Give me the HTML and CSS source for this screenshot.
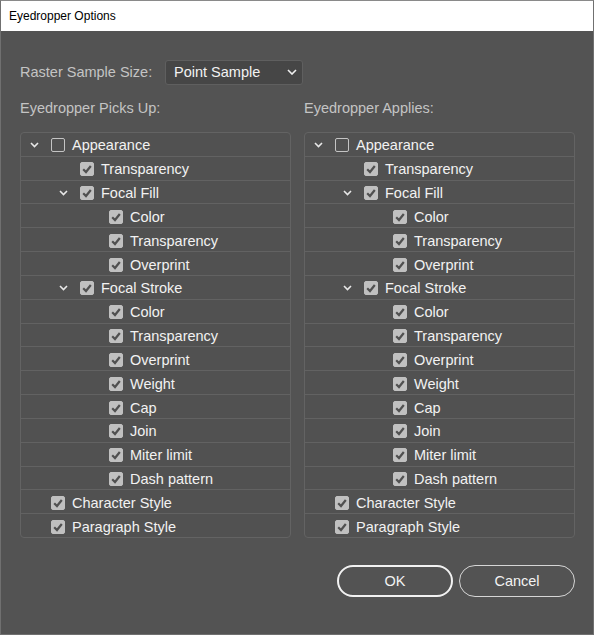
FILE: index.html
```html
<!DOCTYPE html>
<html>
<head>
<meta charset="utf-8">
<link rel="stylesheet" href="styles.css">
</head>
<body>
<div class="window">
  <div class="titlebar">Eyedropper Options</div>
  <div class="content">
    <div class="sample-row">
      <span class="label">Raster Sample Size:</span>
      <div class="select">
        <span>Point Sample</span>
        <svg class="sel-chev" width="10" height="6" viewBox="0 0 10 6"><polyline points="1,1 5,5 9,1" fill="none" stroke="#f0f0f0" stroke-width="1.6"/></svg>
      </div>
    </div>
    <div class="columns">
      <div class="column">
        <div class="label header">Eyedropper Picks Up:</div>
        <div class="panel" id="left"></div>
      </div>
      <div class="column">
        <div class="label header">Eyedropper Applies:</div>
        <div class="panel" id="right"></div>
      </div>
    </div>
    <div class="buttons">
      <button class="btn ok">OK</button>
      <button class="btn cancel">Cancel</button>
    </div>
  </div>
</div>
<script>
var items = [
  [0,"Appearance",true,false],
  [1,"Transparency",false,true],
  [1,"Focal Fill",true,true],
  [2,"Color",false,true],
  [2,"Transparency",false,true],
  [2,"Overprint",false,true],
  [1,"Focal Stroke",true,true],
  [2,"Color",false,true],
  [2,"Transparency",false,true],
  [2,"Overprint",false,true],
  [2,"Weight",false,true],
  [2,"Cap",false,true],
  [2,"Join",false,true],
  [2,"Miter limit",false,true],
  [2,"Dash pattern",false,true],
  [0,"Character Style",false,true],
  [0,"Paragraph Style",false,true]
];
var chev = '<svg width="9" height="6" viewBox="0 0 9 6"><polyline points="1,1 4.5,4.5 8,1" fill="none" stroke="#e8e8e8" stroke-width="1.6"/></svg>';
var check = '<svg width="14" height="14" viewBox="0 0 14 14"><polyline points="3.2,7.2 6,10 10.8,4" fill="none" stroke="#505050" stroke-width="2.2"/></svg>';
function build(el){
  var h = "";
  items.forEach(function(it){
    h += '<div class="row"><span class="indent lvl' + it[0] + '"></span>' +
      '<span class="chev">' + (it[2] ? chev : '') + '</span>' +
      '<span class="cb ' + (it[3] ? 'checked' : '') + '">' + (it[3] ? check : '') + '</span>' +
      '<span class="txt">' + it[1] + '</span></div>';
  });
  el.innerHTML = h;
}
build(document.getElementById("left"));
build(document.getElementById("right"));
</script>
</body>
</html>
```

FILE: styles.css
```css
html, body {
  margin: 0;
  padding: 0;
  background: #535353;
}
.window {
  width: 594px;
  height: 635px;
  box-sizing: border-box;
  border: 1px solid #707070;
  border-top-color: #8a8a8a;
  background: #535353;
  font-family: "Liberation Sans", Arial, sans-serif;
  overflow: hidden;
}
.titlebar {
  height: 30px;
  background: #ffffff;
  color: #000;
  font-family: "Liberation Sans", Arial, sans-serif;
  font-size: 12px;
  line-height: 30px;
  padding-left: 8px;
}
.content {
  padding: 28px 0 0 19px;
}
.label {
  color: #c4c4c4;
  font-size: 14.5px;
}
.sample-row {
  display: flex;
  align-items: center;
  height: 26px;
}
.sample-row .label {
  width: 145px;
}
.select {
  width: 138px;
  height: 25px;
  box-sizing: border-box;
  border: 1px solid #5f5f5f;
  border-radius: 3px;
  background: #464646;
  display: flex;
  align-items: center;
  justify-content: space-between;
  padding: 0 5px 0 8px;
  color: #f2f2f2;
  font-size: 14.5px;
}
.columns {
  display: flex;
  gap: 13px;
  margin-top: 12px;
}
.column {
  width: 271px;
}
.header {
  height: 24px;
  line-height: 22px;
  margin-bottom: 11px;
}
.panel {
  border: 1px solid #636363;
  border-radius: 4px;
  background: #515151;
  height: 406px;
  box-sizing: border-box;
  display: flex;
  flex-direction: column;
}
.row {
  flex: 1 1 0;
  display: flex;
  align-items: center;
  border-top: 1px solid #626262;
  color: #f2f2f2;
  font-size: 14.5px;
  padding-top: 2px;
  box-sizing: border-box;
}
.row:first-child {
  border-top: none;
}
.indent { width: 3px; flex: none; }
.indent.lvl1 { width: 32px; }
.indent.lvl2 { width: 61px; }
.chev {
  width: 20px;
  flex: none;
  display: flex;
  justify-content: center;
  align-items: center;
}
.cb {
  width: 14px;
  height: 14px;
  box-sizing: border-box;
  border: 1px solid #c4c4c4;
  border-radius: 2px;
  margin-left: 7px;
  flex: none;
  display: flex;
}
.cb.checked {
  background: #c0c0c0;
  border-color: #c0c0c0;
}
.cb svg { margin: -1px; }
.txt {
  margin-left: 7px;
}
.buttons {
  display: flex;
  justify-content: flex-end;
  gap: 6px;
  margin-top: 27px;
  padding-right: 18px;
}
.btn {
  width: 116px;
  height: 32px;
  border-radius: 16px;
  background: transparent;
  color: #f2f2f2;
  font-family: "Liberation Sans", Arial, sans-serif;
  font-size: 14.5px;
  box-sizing: border-box;
  padding: 0;
}
.btn.ok {
  border: 2px solid #f2f2f2;
}
.btn.cancel {
  border: 1.5px solid #d6d6d6;
}
```
